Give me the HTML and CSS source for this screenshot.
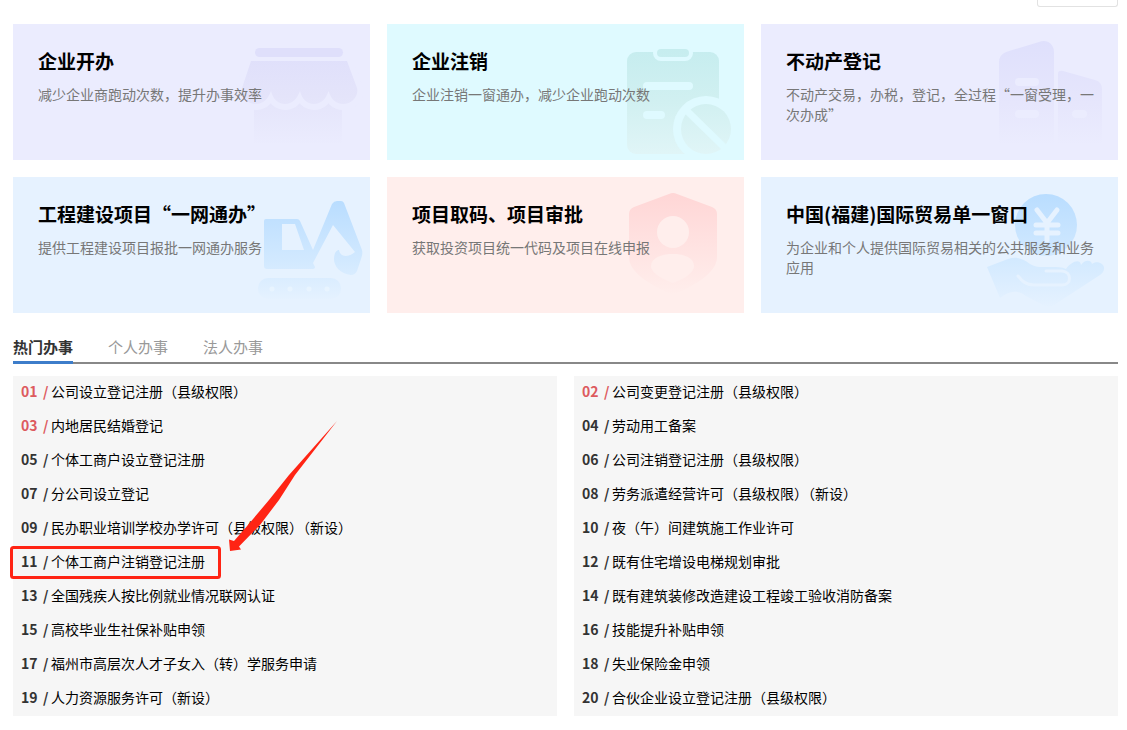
FILE: index.html
```html
<!DOCTYPE html>
<html lang="zh-CN">
<head>
<meta charset="utf-8">
<title>办事服务</title>
<link rel="stylesheet" href="styles.css">
</head>
<body>
<header class="toolbar"><div class="toolbar-box"></div></header>
<main class="page">
  <section class="cards">
    <a class="card card-violet" href="#">
      <svg class="card-art" viewBox="0 0 140 136" aria-hidden="true">
        <defs>
          <linearGradient id="shop" gradientUnits="userSpaceOnUse" x1="0" y1="24" x2="0" y2="122"><stop offset="0" stop-color="#dfdffb"/><stop offset=".5" stop-color="#e4e4fa"/><stop offset="1" stop-color="#ebecfe"/></linearGradient>
        </defs>
        <rect x="24" y="76" width="88" height="43" fill="url(#shop)"/>
        <path d="M21 37H117L127 64C129 72 122 80 113 80C106 80 101 75 98.500 67C96 75 91 80 84 80C77 80 72 75 70 67C67 75 62 80 55 80C48 80 43 75 41 67C38 75 33 80 26 80C17 80 9 72 12 64Z" fill="none" stroke="#ebecfe" stroke-width="12"/>
        <path d="M21 37H117L127 64C129 72 122 80 113 80C106 80 101 75 98.500 67C96 75 91 80 84 80C77 80 72 75 70 67C67 75 62 80 55 80C48 80 43 75 41 67C38 75 33 80 26 80C17 80 9 72 12 64Z" fill="url(#shop)"/>
        <rect x="25" y="24" width="88" height="9" rx="4.500" fill="#dfdffb"/>
      </svg>
      <h2 class="card-title">企业开办</h2>
      <p class="card-text">减少企业商跑动次数，提升办事效率</p>
    </a>
    <a class="card card-cyan" href="#">
      <svg class="card-art" viewBox="0 0 140 136" aria-hidden="true">
        <defs>
          <linearGradient id="board" gradientUnits="userSpaceOnUse" x1="0" y1="25" x2="0" y2="130"><stop offset="0" stop-color="#c6edef"/><stop offset=".5" stop-color="#d1f0f1"/><stop offset="1" stop-color="#e0f5f7"/></linearGradient>
        </defs>
        <rect x="23" y="28" width="92" height="102" rx="9" fill="url(#board)"/>
        <rect x="51" y="23" width="36" height="12" rx="6" fill="#dffaff" stroke="#dffaff" stroke-width="4"/>
        <rect x="53" y="25" width="32" height="8" rx="4" fill="url(#board)"/>
        <path d="M43 62H85M43 91H57" stroke="#dffaff" stroke-width="8" stroke-linecap="round"/>
        <circle cx="102" cy="105" r="33" fill="#dffaff"/>
        <circle cx="102" cy="105" r="25" fill="url(#board)"/>
        <path d="M82 86L121 124" stroke="#dffaff" stroke-width="7"/>
      </svg>
      <h2 class="card-title">企业注销</h2>
      <p class="card-text">企业注销一窗通办，减少企业跑动次数</p>
    </a>
    <a class="card card-violet" href="#">
      <svg class="card-art" viewBox="0 0 140 136" aria-hidden="true">
        <defs>
          <linearGradient id="tower" gradientUnits="userSpaceOnUse" x1="0" y1="17" x2="0" y2="121"><stop offset="0" stop-color="#dfe0fc"/><stop offset=".6" stop-color="#e6e6fc"/><stop offset="1" stop-color="#ebecfe"/></linearGradient>
        </defs>
        <path d="M21 120V38Q21 31 28 28L61 18C69 15 76 20 76 28V120ZM80 120V50Q80 46 85 47L117 56Q124 58 124 65V120Z" fill="url(#tower)"/>
        <path d="M41 58H57M41 90H57M98 90H105" stroke="#ebecfe" stroke-width="8" stroke-linecap="round"/>
      </svg>
      <h2 class="card-title">不动产登记</h2>
      <p class="card-text">不动产交易，办税，登记，全过程“一窗受理，一次办成”</p>
    </a>
    <a class="card card-blue" href="#">
      <svg class="card-art" viewBox="0 0 140 136" aria-hidden="true">
        <defs>
          <linearGradient id="digger" gradientUnits="userSpaceOnUse" x1="0" y1="24" x2="0" y2="124"><stop offset="0" stop-color="#b9ddff"/><stop offset=".6" stop-color="#d2e9ff"/><stop offset="1" stop-color="#e6f2ff"/></linearGradient>
        </defs>
        <path fill-rule="evenodd" d="M36 42H67Q69 42 70 44L83 73L102 27Q104 24 107 24H111Q113 24 114 26L132 73Q133 77 131 82L127 94Q125 98 121 98C110 97 104 89 104 82C104 77 106 73 109 73C110 80 118 81 125 75L103 48L83 86L85 90Q85 92 82 92H37Q34 92 34 89V44Q34 42 36 42ZM52 47V73H74L65 47Z" fill="url(#digger)"/>
        <rect x="28" y="101" width="83" height="21" rx="10" fill="url(#digger)"/>
        <g fill="#e8f4ff"><circle cx="42" cy="112" r="2.500"/><circle cx="60" cy="112" r="2.500"/><circle cx="79" cy="112" r="2.500"/><circle cx="97" cy="112" r="2.500"/></g>
      </svg>
      <h2 class="card-title">工程建设项目“一网通办”</h2>
      <p class="card-text">提供工程建设项目报批一网通办服务</p>
    </a>
    <a class="card card-pink" href="#">
      <svg class="card-art" viewBox="0 0 140 136" aria-hidden="true">
        <defs>
          <linearGradient id="shield" gradientUnits="userSpaceOnUse" x1="0" y1="16" x2="0" y2="118"><stop offset="0" stop-color="#ffd6d6"/><stop offset="1" stop-color="#ffeeec"/></linearGradient>
        </defs>
        <path d="M65 17Q69 15 73 17L108 30Q113 32 113 37V80C113 97 87 110 69 118C51 110 25 97 25 80V37Q25 32 30 30Z" fill="url(#shield)"/>
        <circle cx="69" cy="55" r="16" fill="#ffeeec"/>
        <path d="M69 77C81 77 90 81 90 89C90 97 77 103 69 106C61 103 47 97 47 89C47 81 57 77 69 77Z" fill="#ffeeec"/>
      </svg>
      <h2 class="card-title">项目取码、项目审批</h2>
      <p class="card-text">获取投资项目统一代码及项目在线申报</p>
    </a>
    <a class="card card-blue" href="#">
      <svg class="card-art" viewBox="0 0 140 136" aria-hidden="true">
        <defs>
          <linearGradient id="coin" gradientUnits="userSpaceOnUse" x1="0" y1="17" x2="0" y2="132"><stop offset="0" stop-color="#b9ddff"/><stop offset=".6" stop-color="#d4eaff"/><stop offset="1" stop-color="#e6f2ff"/></linearGradient>
        </defs>
        <circle cx="68" cy="48" r="31" fill="url(#coin)"/>
        <path d="M59 33L69 46L79 33M69 46V63M58 48H80M58 56H80" fill="none" stroke="#e6f2ff" stroke-width="5" stroke-linecap="round"/>
        <path d="M9 90L30 82C39 79 45 82 52 87C58 91 64 90 72 90C79 90 84 90 88 92C93 85 102 81 103 88C106 83 113 82 114 87C119 83 127 87 126 92Q126 95 122 98L76 128Q71 131 65 128L48 119C40 113 32 113 22 121Z" fill="url(#coin)"/>
        <path d="M40 99C44 104 48 108 56 108H84C94 108 94 95 84 94H68" fill="none" stroke="#e6f2ff" stroke-width="3" stroke-linecap="round"/>
      </svg>
      <h2 class="card-title">中国(福建)国际贸易单一窗口</h2>
      <p class="card-text">为企业和个人提供国际贸易相关的公共服务和业务应用</p>
    </a>
  </section>

  <nav class="tabs">
    <button class="tab tab-active" type="button">热门办事</button>
    <button class="tab" type="button">个人办事</button>
    <button class="tab" type="button">法人办事</button>
  </nav>

  <section class="lists">
    <ul class="list">
      <li><a class="item item-hot" href="#"><b class="num">01</b><b class="slash">/</b>公司设立登记注册（县级权限）</a></li>
      <li><a class="item item-hot" href="#"><b class="num">03</b><b class="slash">/</b>内地居民结婚登记</a></li>
      <li><a class="item" href="#"><b class="num">05</b><b class="slash">/</b>个体工商户设立登记注册</a></li>
      <li><a class="item" href="#"><b class="num">07</b><b class="slash">/</b>分公司设立登记</a></li>
      <li><a class="item" href="#"><b class="num">09</b><b class="slash">/</b>民办职业培训学校办学许可（县级权限）（新设）</a></li>
      <li class="marked"><a class="item" href="#"><b class="num">11</b><b class="slash">/</b>个体工商户注销登记注册</a>
        <svg class="marker" viewBox="0 0 332 160" aria-hidden="true">
          <rect x="2.500" y="127.500" width="208" height="30" rx="2" fill="none" stroke="#ff2414" stroke-width="3"/>
          <path d="M328 1L280 55L260 80L239 105L225 121L220 119.500L221 131L232 129.500L230 126.500L251 105L270 80L286 55Z" fill="#ff2414"/>
        </svg>
      </li>
      <li><a class="item" href="#"><b class="num">13</b><b class="slash">/</b>全国残疾人按比例就业情况联网认证</a></li>
      <li><a class="item" href="#"><b class="num">15</b><b class="slash">/</b>高校毕业生社保补贴申领</a></li>
      <li><a class="item" href="#"><b class="num">17</b><b class="slash">/</b>福州市高层次人才子女入（转）学服务申请</a></li>
      <li><a class="item" href="#"><b class="num">19</b><b class="slash">/</b>人力资源服务许可（新设）</a></li>
    </ul>
    <ul class="list">
      <li><a class="item item-hot" href="#"><b class="num">02</b><b class="slash">/</b>公司变更登记注册（县级权限）</a></li>
      <li><a class="item" href="#"><b class="num">04</b><b class="slash">/</b>劳动用工备案</a></li>
      <li><a class="item" href="#"><b class="num">06</b><b class="slash">/</b>公司注销登记注册（县级权限）</a></li>
      <li><a class="item" href="#"><b class="num">08</b><b class="slash">/</b>劳务派遣经营许可（县级权限）（新设）</a></li>
      <li><a class="item" href="#"><b class="num">10</b><b class="slash">/</b>夜（午）间建筑施工作业许可</a></li>
      <li><a class="item" href="#"><b class="num">12</b><b class="slash">/</b>既有住宅增设电梯规划审批</a></li>
      <li><a class="item" href="#"><b class="num">14</b><b class="slash">/</b>既有建筑装修改造建设工程竣工验收消防备案</a></li>
      <li><a class="item" href="#"><b class="num">16</b><b class="slash">/</b>技能提升补贴申领</a></li>
      <li><a class="item" href="#"><b class="num">18</b><b class="slash">/</b>失业保险金申领</a></li>
      <li><a class="item" href="#"><b class="num">20</b><b class="slash">/</b>合伙企业设立登记注册（县级权限）</a></li>
    </ul>
  </section>
</main>
</body>
</html>
```
FILE: styles.css
```css
* {
  box-sizing: border-box;
}

body {
  margin: 0;
  background: #fff;
  color: #000;
  font-family: "Noto Sans CJK SC", sans-serif;
  font-size: 14px;
}

a {
  color: inherit;
  text-decoration: none;
}

.toolbar {
  display: flex;
  justify-content: flex-end;
  padding: 0 9px 17px;
}

.toolbar-box {
  width: 81px;
  height: 7px;
  border: 1px solid #e2e2e2;
  border-top: 0;
  border-radius: 0 0 3px 3px;
}

.page {
  padding: 0 9px 14px 13px;
}

.cards {
  display: grid;
  grid-template-columns: repeat(3, 1fr);
  gap: 17px;
}

.card {
  position: relative;
  min-height: 136px;
  padding: 25px 17px 20px 25px;
}

.card-violet { background: #ebecfe; }
.card-cyan { background: #dffaff; }
.card-blue { background: #e6f2ff; }
.card-pink { background: #ffeeec; }

.card-art {
  position: absolute;
  top: 0;
  right: 0;
  width: 140px;
  height: 136px;
}

.card-title {
  position: relative;
  margin: 0 0 11px;
  font-size: 19px;
  line-height: 24px;
  font-weight: 700;
}

.card-text {
  position: relative;
  margin: 0;
  color: #777;
  line-height: 20px;
}

.tabs {
  display: flex;
  gap: 35px;
  margin: 19px 0 12px;
  box-shadow: inset 0 -2px #888;
}

.tab {
  padding: 0;
  border: 0;
  border-bottom: 3px solid transparent;
  background: none;
  color: #999;
  font-family: inherit;
  font-size: 15px;
  line-height: 29px;
}

.tab-active {
  border-bottom-color: #3d7dca;
  color: #333;
  font-weight: 700;
}

.lists {
  display: grid;
  grid-template-columns: repeat(2, 1fr);
  gap: 17px;
}

.list {
  margin: 0;
  padding: 0;
  background: #f6f6f6;
  list-style: none;
}

.item {
  display: flex;
  padding: 0 8px 4px;
  line-height: 30px;
}

.num,
.slash {
  color: #333;
}

.num {
  width: 22px;
}

.slash {
  width: 8px;
}

.item-hot .num,
.item-hot .slash {
  color: #dd5a5e;
}

.marked {
  position: relative;
}

.marker {
  position: absolute;
  left: -4px;
  bottom: 0;
  width: 332px;
  height: 160px;
  pointer-events: none;
}
```
